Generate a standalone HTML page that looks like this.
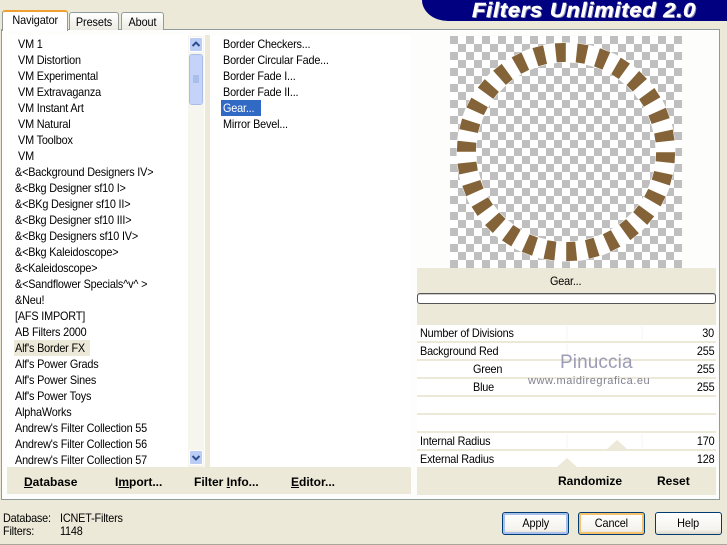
<!DOCTYPE html>
<html><head><meta charset="utf-8">
<style>
html,body{margin:0;padding:0}
body{width:727px;height:545px;overflow:hidden;position:relative;background:#ece9d8;font:12px/16px "Liberation Sans",sans-serif;color:#000}
.a{position:absolute}
.t{position:absolute;white-space:nowrap;line-height:16px;font-size:12px;letter-spacing:-.2px;transform:scaleX(.905);transform-origin:0 50%}
.r{transform-origin:100% 50%}
.l{left:0;position:absolute;white-space:nowrap;height:16px;line-height:16px;letter-spacing:-.2px;transform:scaleX(.905);transform-origin:0 50%}
.b{position:absolute;white-space:nowrap;font-weight:bold;font-size:12px;line-height:16px}
.s{display:inline-block;transform:scaleX(.905);letter-spacing:-.1px}
.row{position:absolute;left:417px;width:299px;height:16px;background:#fff}
.btn{position:absolute;top:512px;width:67px;height:23px;box-sizing:border-box;border:1px solid #003c74;border-radius:3px;background:linear-gradient(#fff,#f4f3ee 80%,#dcd8c8);text-align:center;line-height:21px;font-size:12px}
.tab{position:absolute;box-sizing:border-box;border:1px solid #919b9c;border-bottom:none;border-radius:3px 3px 0 0;text-align:center;background:linear-gradient(#fff,#ecebe3)}
</style></head><body>

<!-- header -->
<div class="a" style="left:422px;top:0;width:305px;height:21px;background:#000080;border-bottom-left-radius:26px 21px"></div>
<div class="a" style="left:472px;top:-1px;font:italic bold 20px/24px 'Liberation Sans',sans-serif;color:#fff;letter-spacing:.65px;white-space:nowrap;text-shadow:1px 1px 0 #8a8ab0;transform:scaleX(1.1);transform-origin:0 50%;-webkit-text-stroke:.4px #fff">Filters Unlimited 2.0</div>

<!-- panel -->
<div class="a" style="left:1px;top:29px;width:719px;height:471px;box-sizing:border-box;border:1px solid #919b9c;background:#fdfdfb"></div>

<!-- tabs -->
<div class="tab" style="left:69px;top:12px;width:50px;height:18px;line-height:18px"><span class="s">Presets</span></div>
<div class="tab" style="left:121px;top:12px;width:43px;height:18px;line-height:18px"><span class="s">About</span></div>
<div class="a" style="left:2px;top:10px;width:66px;height:21px;box-sizing:border-box;background:#fff;border:1px solid #919b9c;border-bottom:none;border-top:2px solid #f0a030;border-radius:3px 3px 0 0;text-align:center;line-height:17px"><span class="s">Navigator</span></div>

<!-- beige structure -->
<div class="a" style="left:205px;top:35px;width:5px;height:432px;background:#ece9d8"></div>
<div class="a" style="left:7px;top:467px;width:404px;height:27px;background:#ece9d8"></div>
<div class="a" style="left:417px;top:268px;width:299px;height:227px;background:#ece9d8"></div>

<!-- list 1 -->
<div class="a" style="left:7px;top:35px;width:181px;height:432px;overflow:hidden;background:#fff"></div>
<div class="a" style="left:14px;top:340px;width:76px;height:16px;background:#ece9d8"></div>
<div class="a" style="left:15px;top:36px;width:172px;height:431px;overflow:hidden">
<div class="l" style="left:3px;top:0">VM 1</div>
<div class="l" style="left:3px;top:16px">VM Distortion</div>
<div class="l" style="left:3px;top:32px">VM Experimental</div>
<div class="l" style="left:3px;top:48px">VM Extravaganza</div>
<div class="l" style="left:3px;top:64px">VM Instant Art</div>
<div class="l" style="left:3px;top:80px">VM Natural</div>
<div class="l" style="left:3px;top:96px">VM Toolbox</div>
<div class="l" style="left:3px;top:112px">VM</div>
<div class="l" style="top:128px">&amp;&lt;Background Designers IV&gt;</div>
<div class="l" style="top:144px">&amp;&lt;Bkg Designer sf10 I&gt;</div>
<div class="l" style="top:160px">&amp;&lt;BKg Designer sf10 II&gt;</div>
<div class="l" style="top:176px">&amp;&lt;Bkg Designer sf10 III&gt;</div>
<div class="l" style="top:192px">&amp;&lt;Bkg Designers sf10 IV&gt;</div>
<div class="l" style="top:208px">&amp;&lt;Bkg Kaleidoscope&gt;</div>
<div class="l" style="top:224px">&amp;&lt;Kaleidoscope&gt;</div>
<div class="l" style="top:240px">&amp;&lt;Sandflower Specials^v^ &gt;</div>
<div class="l" style="top:256px">&amp;Neu!</div>
<div class="l" style="top:272px">[AFS IMPORT]</div>
<div class="l" style="top:288px">AB Filters 2000</div>
<div class="l" style="top:304px">Alf's Border FX</div>
<div class="l" style="top:320px">Alf's Power Grads</div>
<div class="l" style="top:336px">Alf's Power Sines</div>
<div class="l" style="top:352px">Alf's Power Toys</div>
<div class="l" style="top:368px">AlphaWorks</div>
<div class="l" style="top:384px">Andrew's Filter Collection 55</div>
<div class="l" style="top:400px">Andrew's Filter Collection 56</div>
<div class="l" style="top:416px">Andrew's Filter Collection 57</div>
</div>

<!-- scrollbar -->
<div class="a" style="left:188px;top:36px;width:16px;height:431px;background:#f6f5ee"></div>
<div class="a" style="left:189px;top:37px;width:14px;height:15px;box-sizing:border-box;border:1px solid #fff;border-radius:2px;background:#bccdf5"></div>
<svg class="a" style="left:189px;top:37px" width="14" height="15"><path d="M3.5 9 L7 5.5 L10.5 9" fill="none" stroke="#2d4f8e" stroke-width="2"/></svg>
<div class="a" style="left:189px;top:54px;width:14px;height:51px;box-sizing:border-box;border:1px solid #fff;outline:1px solid #a9bde8;outline-offset:-1px;border-radius:3px;background:#c4d3f7"></div>
<svg class="a" style="left:192px;top:75px" width="8" height="9"><path d="M1 1H7M1 3H7M1 5H7M1 7H7" stroke="#8fa8e0" stroke-width="1"/></svg>
<div class="a" style="left:189px;top:450px;width:14px;height:15px;box-sizing:border-box;border:1px solid #fff;border-radius:2px;background:#bccdf5"></div>
<svg class="a" style="left:189px;top:450px" width="14" height="15"><path d="M3.5 6 L7 9.5 L10.5 6" fill="none" stroke="#2d4f8e" stroke-width="2"/></svg>

<!-- list 2 -->
<div class="a" style="left:210px;top:35px;width:201px;height:432px;background:#fff"></div>
<div class="a" style="left:221px;top:100px;width:40px;height:16px;background:#316ac5"></div>
<div class="t" style="left:223px;top:36px">Border Checkers...</div>
<div class="t" style="left:223px;top:52px">Border Circular Fade...</div>
<div class="t" style="left:223px;top:68px">Border Fade I...</div>
<div class="t" style="left:223px;top:84px">Border Fade II...</div>
<div class="t" style="left:223px;top:100px;color:#fff">Gear...</div>
<div class="t" style="left:223px;top:116px">Mirror Bevel...</div>

<!-- bottom buttons left -->
<div class="b" style="left:24px;top:474px"><u>D</u>atabase</div>
<div class="b" style="left:115px;top:474px">I<u>m</u>port...</div>
<div class="b" style="left:194px;top:474px">Filter <u>I</u>nfo...</div>
<div class="b" style="left:291px;top:474px"><u>E</u>ditor...</div>

<!-- preview -->
<div class="a" style="left:450px;top:36px;width:232px;height:232px;background:#fff;background-image:conic-gradient(#fff 25%,#bfbfbf 0 50%,#fff 0 75%,#bfbfbf 0);background-size:16px 16px"></div>
<svg class="a" style="left:450px;top:36px" width="232" height="232" viewBox="0 0 232 232">
<circle cx="116" cy="116" r="99.5" fill="none" stroke="#fff" stroke-width="20"/>
<g transform="translate(116 116)" fill="#836337">
<path d="M-5.5 -109H5.5L4.5 -90H-4.5Z" transform="rotate(-3)"/>
<path d="M-5.5 -109H5.5L4.5 -90H-4.5Z" transform="rotate(9)"/>
<path d="M-5.5 -109H5.5L4.5 -90H-4.5Z" transform="rotate(21)"/>
<path d="M-5.5 -109H5.5L4.5 -90H-4.5Z" transform="rotate(33)"/>
<path d="M-5.5 -109H5.5L4.5 -90H-4.5Z" transform="rotate(45)"/>
<path d="M-5.5 -109H5.5L4.5 -90H-4.5Z" transform="rotate(57)"/>
<path d="M-5.5 -109H5.5L4.5 -90H-4.5Z" transform="rotate(69)"/>
<path d="M-5.5 -109H5.5L4.5 -90H-4.5Z" transform="rotate(81)"/>
<path d="M-5.5 -109H5.5L4.5 -90H-4.5Z" transform="rotate(93)"/>
<path d="M-5.5 -109H5.5L4.5 -90H-4.5Z" transform="rotate(105)"/>
<path d="M-5.5 -109H5.5L4.5 -90H-4.5Z" transform="rotate(117)"/>
<path d="M-5.5 -109H5.5L4.5 -90H-4.5Z" transform="rotate(129)"/>
<path d="M-5.5 -109H5.5L4.5 -90H-4.5Z" transform="rotate(141)"/>
<path d="M-5.5 -109H5.5L4.5 -90H-4.5Z" transform="rotate(153)"/>
<path d="M-5.5 -109H5.5L4.5 -90H-4.5Z" transform="rotate(165)"/>
<path d="M-5.5 -109H5.5L4.5 -90H-4.5Z" transform="rotate(177)"/>
<path d="M-5.5 -109H5.5L4.5 -90H-4.5Z" transform="rotate(189)"/>
<path d="M-5.5 -109H5.5L4.5 -90H-4.5Z" transform="rotate(201)"/>
<path d="M-5.5 -109H5.5L4.5 -90H-4.5Z" transform="rotate(213)"/>
<path d="M-5.5 -109H5.5L4.5 -90H-4.5Z" transform="rotate(225)"/>
<path d="M-5.5 -109H5.5L4.5 -90H-4.5Z" transform="rotate(237)"/>
<path d="M-5.5 -109H5.5L4.5 -90H-4.5Z" transform="rotate(249)"/>
<path d="M-5.5 -109H5.5L4.5 -90H-4.5Z" transform="rotate(261)"/>
<path d="M-5.5 -109H5.5L4.5 -90H-4.5Z" transform="rotate(273)"/>
<path d="M-5.5 -109H5.5L4.5 -90H-4.5Z" transform="rotate(285)"/>
<path d="M-5.5 -109H5.5L4.5 -90H-4.5Z" transform="rotate(297)"/>
<path d="M-5.5 -109H5.5L4.5 -90H-4.5Z" transform="rotate(309)"/>
<path d="M-5.5 -109H5.5L4.5 -90H-4.5Z" transform="rotate(321)"/>
<path d="M-5.5 -109H5.5L4.5 -90H-4.5Z" transform="rotate(333)"/>
<path d="M-5.5 -109H5.5L4.5 -90H-4.5Z" transform="rotate(345)"/>
</g>
</svg>

<!-- Gear band -->
<div class="t" style="left:550px;top:273px">Gear...</div>
<div class="a" style="left:417px;top:293px;width:299px;height:11px;box-sizing:border-box;border:1px solid #555;border-radius:3px;background:#fff;box-shadow:inset 0 1px 0 #ccc"></div>

<!-- parameter rows -->
<div class="row" style="top:325px"></div>
<div class="row" style="top:343px"></div>
<div class="row" style="top:361px"></div>
<div class="row" style="top:379px"></div>
<div class="row" style="top:397px"></div>
<div class="row" style="top:415px"></div>
<div class="row" style="top:433px"></div>
<div class="row" style="top:451px"></div>
<svg class="a" style="left:417px;top:325px" width="299" height="142">
<path d="M200 115L190 124H210Z" fill="#ece9d8"/>
<path d="M150 133L140 142H160Z" fill="#ece9d8"/>
<path d="M150 1V15M150 19V33M150 109V123M225 109V123M225 1V15" stroke="#f7f6f0" stroke-width="1"/>
</svg>
<div class="t" style="left:420px;top:325px">Number of Divisions</div>
<div class="t" style="left:420px;top:343px">Background Red</div>
<div class="t" style="left:473px;top:361px">Green</div>
<div class="t" style="left:473px;top:379px">Blue</div>
<div class="t" style="left:420px;top:433px">Internal Radius</div>
<div class="t" style="left:420px;top:451px">External Radius</div>
<div class="t r" style="right:13px;top:325px">30</div>
<div class="t r" style="right:13px;top:343px">255</div>
<div class="t r" style="right:13px;top:361px">255</div>
<div class="t r" style="right:13px;top:379px">255</div>
<div class="t r" style="right:13px;top:433px">170</div>
<div class="t r" style="right:13px;top:451px">128</div>

<!-- watermark -->
<div class="a" style="left:560px;top:352px;font-size:19px;line-height:22px;color:#9c9cb6;letter-spacing:.1px;white-space:nowrap">Pinuccia</div>
<div class="a" style="left:528px;top:374px;font-size:11px;line-height:14px;color:#80808f;letter-spacing:.55px;white-space:nowrap">www.maidiregrafica.eu</div>

<!-- randomize/reset -->
<div class="b" style="left:558px;top:473px">Randomize</div>
<div class="b" style="left:657px;top:473px">Reset</div>

<!-- status -->
<div class="t" style="left:3px;top:510px">Database:</div>
<div class="t" style="left:60px;top:510px">ICNET-Filters</div>
<div class="t" style="left:3px;top:523px">Filters:</div>
<div class="t" style="left:60px;top:523px">1148</div>

<!-- buttons -->
<div class="btn" style="left:502px;box-shadow:inset 0 0 0 2px #a9c0ec"><span class="s">Apply</span></div>
<div class="btn" style="left:578px;box-shadow:inset 0 0 0 2px #f5c16c"><span class="s">Cancel</span></div>
<div class="btn" style="left:655px"><span class="s">Help</span></div>

<div class="a" style="left:0;top:544px;width:727px;height:1px;background:#aca899"></div>
</body></html>
